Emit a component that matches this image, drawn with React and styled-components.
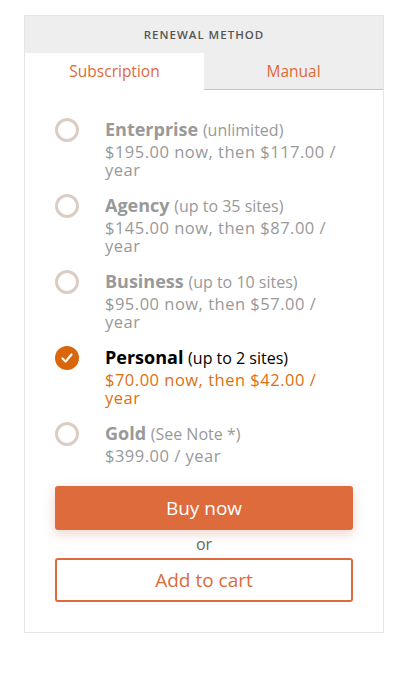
import styled, { createGlobalStyle } from "styled-components";

const GlobalStyle = createGlobalStyle`
  body {
    margin: 0;
    background: #fff;
    font-family: "Open Sans", "Lato", sans-serif;
  }
`;

const plans = [
  { name: "Enterprise", note: "(unlimited)", price: "$195.00 now, then $117.00 / year" },
  { name: "Agency", note: "(up to 35 sites)", price: "$145.00 now, then $87.00 / year" },
  { name: "Business", note: "(up to 10 sites)", price: "$95.00 now, then $57.00 / year" },
  { name: "Personal", note: "(up to 2 sites)", price: "$70.00 now, then $42.00 / year", checked: true },
  { name: "Gold", note: "(See Note *)", price: "$399.00 / year" },
];

export default function App() {
  return (
    <>
      <GlobalStyle />
      <Page>
        <Card>
          <Header>
            <Heading>Renewal method</Heading>
            <Tabs>
              <Tab $active>Subscription</Tab>
              <Tab>Manual</Tab>
            </Tabs>
          </Header>

          <Body>
            <PlanList>
              {plans.map((p) => (
                <Plan key={p.name}>
                  <Radio $checked={p.checked}>
                    {p.checked && (
                      <svg width="14" height="14" viewBox="0 0 14 14">
                        <path
                          d="M2.5 7.5 L5.6 10.5 L11.5 3.5"
                          fill="none"
                          stroke="#fff"
                          strokeWidth="2.2"
                          strokeLinecap="round"
                          strokeLinejoin="round"
                        />
                      </svg>
                    )}
                  </Radio>
                  <PlanText $checked={p.checked}>
                    <Title>
                      <PlanName>{p.name}</PlanName> <PlanNote>{p.note}</PlanNote>
                    </Title>
                    <Price $checked={p.checked}>{p.price}</Price>
                  </PlanText>
                </Plan>
              ))}
            </PlanList>

            <BuyButton>Buy now</BuyButton>
            <Or>or</Or>
            <CartButton>Add to cart</CartButton>
          </Body>
        </Card>
      </Page>
    </>
  );
}

const Page = styled.div`
  padding: 15px 16px 0 24px;
`;

const Card = styled.div`
  width: 358px;
  border: 1px solid #e5e5e5;
  background: #fff;
`;

const Header = styled.div`
  background: #eeeeee;
`;

const Heading = styled.div`
  height: 37px;
  display: flex;
  align-items: center;
  justify-content: center;
  text-transform: uppercase;
  font-size: 11.5px;
  font-weight: 600;
  letter-spacing: 1px;
  color: #555;
`;

const Tabs = styled.div`
  display: flex;
`;

const Tab = styled.div`
  flex: 1;
  height: 37px;
  display: flex;
  align-items: center;
  justify-content: center;
  font-size: 15.5px;
  color: #e0693a;
  background: ${(p) => (p.$active ? "#fff" : "#eeeeee")};
  border-bottom: 1px solid ${(p) => (p.$active ? "#fff" : "#ebb9a1")};
  box-sizing: border-box;
`;

const Body = styled.div`
  padding: 28px 30px 30px 30px;
`;

const PlanList = styled.div`
  display: flex;
  flex-direction: column;
  gap: 15px;
  margin-bottom: 21px;
`;

const Plan = styled.div`
  display: flex;
  align-items: flex-start;
`;

const Radio = styled.div`
  flex: none;
  width: 24px;
  height: 24px;
  box-sizing: border-box;
  border-radius: 50%;
  margin-top: 0;
  margin-right: 26px;
  display: flex;
  align-items: center;
  justify-content: center;
  border: ${(p) => (p.$checked ? "none" : "3px solid #dbcdc3")};
  background: ${(p) => (p.$checked ? "#da660b" : "#fff")};
`;

const PlanText = styled.div`
  width: 246px;
  color: ${(p) => (p.$checked ? "#000" : "#999")};
`;

const Title = styled.div`
  height: 22px;
  line-height: 22px;
  font-size: 18px;
  white-space: nowrap;
`;

const PlanName = styled.span`
  font-weight: 700;
`;

const PlanNote = styled.span`
  font-size: 16px;
`;

const Price = styled.div`
  margin-top: 3px;
  font-size: 16.5px;
  letter-spacing: 0.5px;
  line-height: 18px;
  color: ${(p) => (p.$checked ? "#de6f10" : "#999")};
`;

const BuyButton = styled.button`
  display: block;
  width: 100%;
  height: 44px;
  border: none;
  border-radius: 3px;
  background: #dd6b3b;
  color: #fff;
  font-family: inherit;
  font-size: 19px;
  box-shadow: 0 4px 12px rgba(180, 90, 50, 0.25);
`;

const Or = styled.div`
  text-align: center;
  font-size: 16px;
  color: #666;
  line-height: 28px;
`;

const CartButton = styled.button`
  display: block;
  width: 100%;
  height: 44px;
  border: 2px solid #dd6b3b;
  border-radius: 3px;
  background: #fff;
  color: #dd6b3b;
  font-family: inherit;
  font-size: 19px;
`;
